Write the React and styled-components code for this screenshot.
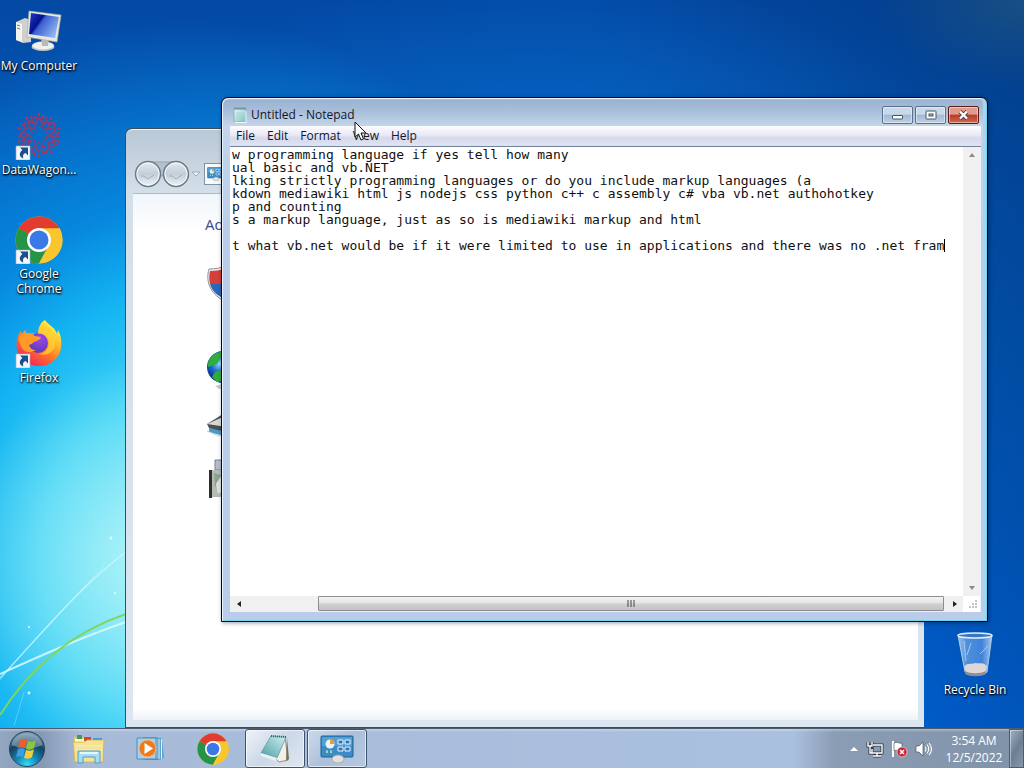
import React from "react";
import styled, { createGlobalStyle, css } from "styled-components";

const GlobalStyle = createGlobalStyle`
  * { box-sizing: border-box; }
  body {
    margin: 0;
    overflow: hidden;
    font: 12px/15px "Open Sans", "Noto Sans", sans-serif;
    color: #15152a;
  }
  button {
    margin: 0;
    padding: 0;
    border: 0;
    background: none;
    color: inherit;
    font: inherit;
  }
  svg { display: block; flex: none; }
`;

const Screen = styled.div`
  display: flex;
  flex-direction: column;
  height: 100vh;
`;

const Workspace = styled.main`
  position: relative;
  flex: 1;
  min-height: 0;
  overflow: hidden;
  background:
    radial-gradient(ellipse 190px 200px at 150px 560px, rgba(200, 250, 248, 0.75), transparent),
    radial-gradient(ellipse 460px 540px at 190px 560px, #7ce8f8 0%, #3ed2f6 32%, #14b4f2 50%, rgba(8, 150, 232, 0.75) 66%, rgba(2, 110, 220, 0) 100%),
    radial-gradient(ellipse 150px 90px at 100% 0, rgba(30, 84, 130, 0.8), transparent),
    radial-gradient(ellipse 420px 220px at 540px 190px, rgba(8, 110, 205, 0.7), transparent),
    linear-gradient(90deg, transparent 60%, rgba(0, 35, 90, 0.35)),
    linear-gradient(#0349a4 0%, #0455b4 18%, #0062ca 50%, #0070f0 100%);
`;

const Rays = styled.svg`
  position: absolute;
  left: 0;
  bottom: 0;
`;

const IconColumn = styled.div`
  position: relative;
  display: flex;
  flex-direction: column;
  gap: 8px;
  width: 78px;
  padding-top: 8px;
`;

const Shortcut = styled.button`
  display: flex;
  flex-direction: column;
  align-items: center;
  gap: 2px;
  height: 96px;
  color: #fff;
  text-shadow: 0 1px 2px #000, 1px 1px 2px #000;
`;

const ShortcutLabel = styled.span`
  width: ${(p) => (p.$narrow ? "60px" : "auto")};
  white-space: ${(p) => (p.$narrow ? "normal" : "nowrap")};
`;

const BinSpot = styled.div`
  position: absolute;
  right: 10px;
  bottom: 0;
  width: 78px;
  display: grid;
`;

const Window = styled.section`
  position: absolute;
  display: flex;
  flex-direction: column;
  border: 1px solid #3c4c5c;
  border-radius: 7px 7px 0 0;
`;

const PanelWindow = styled(Window)`
  inset: 128px 100px 0 125px;
  padding: 0 6px 7px 7px;
  border-right: 0;
  background: linear-gradient(#b9c8d6, #d3dfe9 64px, #dce6f0);
  box-shadow: inset 0 1px #eef4f8;
`;

const PanelNav = styled.nav`
  display: flex;
  align-items: center;
  height: 64px;
  padding-top: 26px;
`;

const AddressBar = styled.div`
  flex: 1;
  display: flex;
  align-items: center;
  height: 22px;
  margin-left: 3px;
  padding-left: 2px;
  border: 1px solid #7d93aa;
  background: #f6fafd;
`;

const PanelBody = styled.div`
  flex: 1;
  padding: 20px 72px 0;
  border-top: 1px solid #a9bccd;
  background: linear-gradient(#f1f6fb, #fff 40px calc(100% - 12px), #eef2f6);
`;

const PanelHeading = styled.h1`
  margin: 0 0 31px;
  font-size: 15px;
  font-weight: 400;
  line-height: 20px;
  color: #3a4a8c;
`;

const CategoryList = styled.div`
  display: grid;
  justify-items: start;
  padding-left: 2px;
  grid-template-rows: 86px 62px 46px 48px;
`;

const NotepadWindow = styled(Window)`
  inset: 97px 36px 106px 221px;
  padding: 0 6px 9px 8px;
  border-color: #050a12;
  background:
    linear-gradient(rgba(255, 255, 255, 0) 110px, #b9cdea 130px),
    linear-gradient(#dbe8f5 0, #9bb3d0 2px, #a8c0dc 14px, #c5d6ea 28px, #bfd2ec 60px);
  box-shadow: inset 1px 1px #e8f2fa, inset -1px -1px #6fd5ee, inset -4px 0 #a8d4ee, 1px 1px 4px rgba(0, 10, 40, 0.4);
`;

const TitleBar = styled.header`
  display: flex;
  align-items: center;
  height: 28px;
  padding: 5px 2px 0 2px;
  gap: 4px;
`;

const Title = styled.h2`
  flex: 1;
  margin: 0;
  font: inherit;
`;

const CaptionButton = styled.button`
  display: grid;
  place-items: center;
  width: 31px;
  height: 18px;
  margin-left: -2px;
  border: 1px solid #57718f;
  border-radius: 2px;
  background: linear-gradient(#c9d9ea 0 45%, #a3bad3 50%, #bdd0e6);
  box-shadow: inset 0 0 0 1px rgba(255, 255, 255, 0.45);
  ${(p) =>
    p.$close &&
    css`
      border-color: #5c1a18;
      background: linear-gradient(#dd9c8d 0 45%, #b83b27 50%, #cf6b50);
    `}
`;

const MenuBar = styled.nav`
  display: flex;
  align-items: center;
  gap: 12px;
  height: 21px;
  padding: 0 0 1px 6px;
  border-bottom: 1px solid #71829d;
  background: linear-gradient(#fdfcff, #e9e9f6 45%, #d5d9ea 60%, #e0e3f2);
`;

const Editor = styled.div`
  flex: 1;
  min-height: 0;
  display: grid;
  grid-template: 1fr 16px / 1fr 17px;
  border-right: 1px solid #e8f0fa;
  background: #fff;
`;

const TextPane = styled.div`
  position: relative;
  display: flex;
`;

const TextArea = styled.textarea`
  flex: 1;
  min-width: 0;
  padding: 1px 0 0 2px;
  border: 0;
  outline: 0;
  resize: none;
  overflow: hidden;
  white-space: pre;
  background: none;
  color: #101010;
  font: 13px/13px "DejaVu Sans Mono", monospace;
`;

const Caret = styled.i`
  position: absolute;
  top: 92px;
  left: 714px;
  width: 1px;
  height: 13px;
  background: #000;
`;

const ScrollTrack = styled.div`
  display: flex;
  flex-direction: ${(p) => (p.$vertical ? "column" : "row")};
  justify-content: space-between;
  background: #f0f0f0;
`;

const ScrollArrow = styled.button`
  display: grid;
  place-items: center;
  width: 17px;
  height: 16px;
`;

const ScrollThumb = styled.div`
  display: grid;
  place-items: center;
  flex: 1;
  margin: 0 2px 1px 71px;
  border: 1px solid #8d8d8d;
  border-radius: 1px;
  background: linear-gradient(#f4f4f4, #e4e4e4 45%, #cfcfcf 55%, #c4c4c4);
`;

const Grip = styled.svg`
  place-self: end;
  margin: 3px;
`;

const Pointer = styled.svg`
  position: absolute;
  left: 354px;
  top: 121px;
`;

const Taskbar = styled.footer`
  display: flex;
  align-items: stretch;
  height: 40px;
  border-top: 1px solid #4b5c70;
  background:
    linear-gradient(rgba(255, 255, 255, 0.35), transparent 3px),
    linear-gradient(90deg, #93a7c0 0, #8497b3 40px, #a7bbd8 80px, #a9c0de calc(100% - 230px), #8b9db4 calc(100% - 190px), #8193a9);
`;

const StartButton = styled.button`
  display: grid;
  place-items: center;
  width: 54px;
  margin-right: 5px;
`;

const TaskButtons = styled.div`
  flex: 1;
  display: flex;
  gap: 2px;
`;

const TaskButton = styled.button`
  display: grid;
  place-items: center;
  width: 60px;
  border: 1px solid transparent;
  border-radius: 3px;
  ${(p) =>
    p.$state &&
    css`
      border-color: #3f536e;
      box-shadow: inset 0 0 0 1px rgba(255, 255, 255, 0.6);
      background: ${p.$state === "active"
        ? "linear-gradient(135deg, #eef2f8, #cbd8e8 50%, #dfe8f2)"
        : "linear-gradient(135deg, #cdd9ea, #adc0da 50%, #b4c8e2)"};
    `}
`;

const Tray = styled.div`
  display: flex;
  align-items: center;
  gap: 7px;
  color: #fff;
`;

const Clock = styled.time`
  width: 70px;
  text-align: center;
  line-height: 17px;
`;

const ShowDesktop = styled.button`
  align-self: stretch;
  width: 15px;
  border: 1px solid #4d5d70;
  background: linear-gradient(120deg, #a3b2c4, #6d7e93 50%, #8797ab);
  box-shadow: inset 1px 1px rgba(255, 255, 255, 0.4);
`;

function LinkArrow() {
  return (
    <g>
      <path d="M1 34h14v14H1z" fill="#f2f7fc" stroke="#9fb4c8" strokeWidth=".6" />
      <path d="M5 35.500h8v8l-2.400-2.400c-2.500 1-3 2.600-2.300 5.400-4.300-1.300-4.600-5.600-.9-8.400z" fill="#1d4f8c" />
    </g>
  );
}

function ComputerIcon() {
  return (
    <svg width="48" height="48" viewBox="0 0 48 48">
      <defs>
        <linearGradient id="crt" x1="0" y1="0" x2="1" y2=".6">
          <stop offset="0" stopColor="#1c3ec4" />
          <stop offset=".4" stopColor="#04108c" />
          <stop offset=".48" stopColor="#3a5fd0" />
          <stop offset="1" stopColor="#8fb4f2" />
        </linearGradient>
      </defs>
      <path d="M1 14l9-4 6 2v22l-8 1-7-3z" fill="#d0d0cc" />
      <path d="M1 14l6 2v18l-6-2z" fill="#f3f3f0" />
      <path d="M2 17l3 1M2 20l3 1" stroke="#777" />
      <ellipse cx="28" cy="39" rx="11.500" ry="4" fill="#bfc0be" />
      <ellipse cx="28" cy="37.500" rx="11" ry="4" fill="#f0f0ee" />
      <path d="M26 30h8l-1 8h-6z" fill="#b9bab8" />
      <path d="M14 3l32 4-4 27-30-5z" fill="#e8e7e1" stroke="#aaa9a4" strokeWidth=".7" />
      <path d="M16 5l28 4-4 21-26-4z" fill="url(#crt)" />
    </svg>
  );
}

function WagonIcon() {
  const spokes = [0, 36, 72, 108, 144, 180, 216, 252, 288, 324];
  return (
    <svg width="48" height="48" viewBox="0 0 48 48">
      <g fill="none" stroke="#b8305a" strokeWidth=".9" strokeOpacity=".85">
        {spokes.map((a) => (
          <g key={a} transform={`rotate(${a} 24 23)`}>
            <path d="M24 16l-4-5 4-4 4 4zM19 13l-3-8 8 2 8-2-3 8M24 7V2" />
            <circle cx="24" cy="2" r=".9" fill="#e0353c" />
            <circle cx="16" cy="5" r=".7" fill="#e0353c" />
          </g>
        ))}
      </g>
      <LinkArrow />
    </svg>
  );
}

function ChromeIcon({ size, linked }) {
  return (
    <svg width={size} height={size} viewBox="0 0 48 48">
      <circle cx="24" cy="24" r="23.500" fill="#f9c62b" />
      <path d="M24 24L3.650 12.250A23.500 23.500 0 0 0 24 47.500l10.200-17.600z" fill="#269447" />
      <path d="M24 24L3.650 12.250A23.500 23.500 0 0 1 44.350 12.250z" fill="#e23c30" />
      <path d="M24 24l9.500 5.500L24 47.500c10 0 23.500-8 23.500-23.500 0-4-1-8-2.700-11.700H24z" fill="#f9c62b" />
      <path d="M24 24L14.500 29.500 3.650 12.250z" fill="#269447" />
      <circle cx="24" cy="24" r="12" fill="#fff" />
      <circle cx="24" cy="24" r="9.500" fill="#3b78e7" />
      {linked && <LinkArrow />}
    </svg>
  );
}

function FirefoxIcon() {
  return (
    <svg width="48" height="48" viewBox="0 0 48 48">
      <defs>
        <linearGradient id="fox" x1=".8" y1=".1" x2=".25" y2=".95">
          <stop offset="0" stopColor="#fff04a" />
          <stop offset=".35" stopColor="#ffb02a" />
          <stop offset=".65" stopColor="#ff6a2c" />
          <stop offset="1" stopColor="#f2245e" />
        </linearGradient>
        <radialGradient id="globeCore" cx=".6" cy=".3" r=".8">
          <stop offset="0" stopColor="#a044e8" />
          <stop offset="1" stopColor="#4b3bb8" />
        </radialGradient>
      </defs>
      <path
        d="M30 0c3 5 10 7 12 14l1-4c3 5 4 11 3 18C44 40 34 46 24 46 11 46 2 37 1.500 25 1.300 19 3 14 6 11l1 3 3-4 2 4c4-1 7-1 11 0 0-6 2-11 7-14z"
        fill="url(#fox)"
      />
      <circle cx="23" cy="23" r="10" fill="url(#globeCore)" />
      <path d="M4 17c4-5 11-5 16-1l6 1c-1 3-4 4-7 5-2 2-3 2-5 3 1 3 3 5 7 5-6 4-13 2-15-4-1-4-3-5-2-9z" fill="#ff9a28" />
      <path d="M23 14c7-1 11 3 11 9s-4 10-10 11c11 3 18-5 16-16C38 9 32 5 29 3c-4 3-5 7-6 11z" fill="#ffd034" fillOpacity=".75" />
      <LinkArrow />
    </svg>
  );
}

function BinIcon() {
  return (
    <svg width="48" height="48" viewBox="0 0 48 48">
      <defs>
        <linearGradient id="glass" x2="1">
          <stop offset="0" stopColor="#b7d6f4" />
          <stop offset=".25" stopColor="#5e9be0" />
          <stop offset=".7" stopColor="#4b8ade" />
          <stop offset="1" stopColor="#c4ddf3" />
        </linearGradient>
      </defs>
      <path d="M7 3h34l-5 37c-3 4-19 4-22 0z" fill="url(#glass)" fillOpacity=".85" stroke="#a9cbe9" />
      <ellipse cx="24" cy="3.500" rx="17" ry="2.500" fill="#3776c0" stroke="#e0eef9" strokeWidth="1.500" />
      <path d="M13 35c3-5 7-2 11-4 4 1 8-1 12 3l-1 6c-3 3-17 3-20 0z" fill="#dcd8d8" />
      <path d="M14 39c5 3 15 3 21 0v3c-5 3-16 3-21 0z" fill="#8f8d92" />
      <path d="M13 9l2 20M20 11l-4 12M29 22l8-8" stroke="#d7e9fa" strokeOpacity=".6" />
    </svg>
  );
}

function NavCircles() {
  return (
    <svg width="68" height="28" viewBox="0 0 68 28">
      <defs>
        <linearGradient id="nav" x2="0" y2="1">
          <stop offset="0" stopColor="#e4ebf1" />
          <stop offset=".5" stopColor="#c3ced8" />
          <stop offset="1" stopColor="#eef3f7" />
        </linearGradient>
      </defs>
      <path d="M15 2h28v9l-14 5-14-5z" fill="#b3c0cd" stroke="#93a2b0" />
      {[15, 43].map((x) => (
        <g key={x}>
          <circle cx={x} cy="14" r="12.500" fill="url(#nav)" stroke="#6c7883" strokeWidth="1.400" />
          <circle cx={x} cy="14" r="11" fill="none" stroke="#f4f8fa" strokeWidth="1" />
          <path d={`M${x - 7} 16h3l4 3 6-4`} stroke="#a0aeba" fill="none" />
        </g>
      ))}
      <path d="M59 12h8l-4 4z" fill="#f0f4f7" stroke="#9eabb8" />
    </svg>
  );
}

function PanelIcon({ width, height }) {
  return (
    <svg width={width} height={height} viewBox="0 0 34 28">
      <rect x="1" y="1" width="32" height="21" rx="1" fill="#3c8cc8" stroke="#1d6195" />
      <rect x="2" y="2" width="30" height="9" fill="#6bb2df" fillOpacity=".5" />
      <circle cx="10" cy="9" r="4.500" fill="#e9f4fa" />
      <path d="M10 9V4.500A4.500 4.500 0 0 1 14.500 9z" fill="#f39b30" />
      <path d="M18 5h5v4h-5zM25 5h5v4h-5zM18 12h5v4h-5zM25 12h5v4h-5z" fill="#2c74b4" stroke="#eef8ff" />
      <path d="M6 17h2M10 17h2M7 15v3M11 15v3" stroke="#c5ef9f" />
      <ellipse cx="18" cy="24" rx="6" ry="4" fill="#e2e2dc" stroke="#989890" strokeWidth=".7" />
    </svg>
  );
}

function ShieldIcon() {
  return (
    <svg width="40" height="40" viewBox="0 0 40 40">
      <path d="M20 0c-5 3-12 4-18 4-4 13 2 27 18 33 16-6 22-20 18-33-6 0-13-1-18-4z" fill="#f0f0ef" stroke="#8c8f96" />
      <path d="M20 2v17H3C2 15 2 10 3 6c6 0 12-1 17-4z" fill="#d6403a" />
      <path d="M20 2v17h17c1-4 1-9 0-13-6 0-12-1-17-4zM3 19h17v16C10 31 5 26 3 19z" fill="#2c68b4" />
    </svg>
  );
}

function GlobeIcon() {
  return (
    <svg width="40" height="40" viewBox="0 0 40 40">
      <defs>
        <radialGradient id="earth" cx=".4" cy=".4">
          <stop offset="0" stopColor="#9fdcf8" />
          <stop offset=".5" stopColor="#1f6ed2" />
          <stop offset="1" stopColor="#0a2f90" />
        </radialGradient>
      </defs>
      <circle cx="16" cy="16" r="16" fill="url(#earth)" />
      <path d="M2 9C6 2 13 0 19 1l-6 6-3 6-6 2-3 1c0-3 0-4 1-7zM8 21l7-2 5 3-3 8-7 1-5-5z" fill="#2fae3c" />
      <path d="M8 35l11-3 10 3-4 3H12z" fill="#c5ccd2" />
    </svg>
  );
}

function PrinterIcon() {
  return (
    <svg width="40" height="24" viewBox="0 0 40 24">
      <path d="M0 11L16 1h22v15L20 21 2 15z" fill="#4c5054" />
      <path d="M0 11L16 4l16 1-12 9z" fill="#d8d8d5" />
      <path d="M2 15l17 4-6 3-11-3z" fill="#4a9cc8" />
      <path d="M0 18l12 5 6-2" stroke="#c6ccd0" fill="none" />
    </svg>
  );
}

function ProgramsIcon() {
  return (
    <svg width="40" height="42" viewBox="0 0 40 42">
      <path d="M8 1h10v10H8z" fill="#b5bccb" stroke="#777f92" />
      <path d="M3 11h30v27H5z" fill="#b4bab4" />
      <path d="M2 11h3v28H2z" fill="#2e302d" />
      <path d="M7 14l10 3v8l-9 3z" fill="#8aa391" />
      <path d="M9 25l5-8 5 13-8 5z" fill="#dfe5da" />
    </svg>
  );
}

function NotepadGlyph() {
  return (
    <svg width="15" height="16" viewBox="0 0 15 16">
      <defs>
        <linearGradient id="paper" x2="1" y2="1">
          <stop offset="0" stopColor="#e5f8f6" />
          <stop offset="1" stopColor="#7fc0c0" />
        </linearGradient>
      </defs>
      <path d="M2 2h12v13H2z" fill="url(#paper)" stroke="#7da9ab" strokeWidth=".7" />
      <path d="M3 .5v2M5 .5v2M7 .5v2M9 .5v2M11 .5v2M13 .5v2" stroke="#45676c" strokeWidth=".8" />
      <path d="M14 4v11.500H3" stroke="#f5fbfb" fill="none" />
      <path d="M4 6h7M4 8h7M4 10h6" stroke="#a2d4d2" strokeWidth=".7" />
    </svg>
  );
}

function StartOrb() {
  return (
    <svg width="40" height="38" viewBox="0 0 40 38">
      <defs>
        <radialGradient id="orb" cx=".5" cy=".95" r=".9">
          <stop offset="0" stopColor="#2fe0fa" />
          <stop offset=".35" stopColor="#1487b4" />
          <stop offset=".7" stopColor="#16415f" />
          <stop offset="1" stopColor="#6c90ab" />
        </radialGradient>
      </defs>
      <circle cx="20" cy="19" r="17.500" fill="url(#orb)" stroke="#26445c" />
      <path d="M4.500 15A16 16 0 0 1 35.500 15C28 19 13 19 4.500 15z" fill="#b7cad8" fillOpacity=".45" />
      <path d="M13 10c3-2 5-1 7 0l-2 8c-2-1-5-1-7 0z" fill="#e85f2a" />
      <path d="M21 11c3 1 6 1 8-1l-2 8c-2 2-5 2-8 1z" fill="#8cc63c" />
      <path d="M11 19c2-1 5-1 7 0l-2 8c-2-1-5-1-7 0z" fill="#3f9be6" />
      <path d="M19 20c3 1 6 1 8-1l-2 8c-2 2-5 2-8 1z" fill="#fccb38" />
    </svg>
  );
}

function ExplorerIcon() {
  return (
    <svg width="34" height="30" viewBox="0 0 34 30">
      <path d="M2 3h9l2 2h18v23H2z" fill="#e9c964" />
      <path d="M5 1h5v4H5z" fill="#39a04b" />
      <path d="M12 3h7v4h-7z" fill="#d2482e" />
      <path d="M21 4h9v4h-9z" fill="#4698dc" />
      <path d="M3 5h9v2h18v4H3z" fill="#fff7cf" />
      <path d="M1 8h12l2-2h17l-1 22H3z" fill="#f6e293" stroke="#cda944" strokeWidth=".7" />
      <path d="M4 12h26M4 16h26" stroke="#fbf0bd" />
      <path d="M6 29V17h22v12h-5v-6H11v6z" fill="#a7dcf1" stroke="#4d9fca" />
      <path d="M8 19h18" stroke="#e5f7fd" strokeWidth="2" />
    </svg>
  );
}

function MediaIcon() {
  return (
    <svg width="30" height="28" viewBox="0 0 30 28">
      <path d="M10 3h16l2 20-4 2H10z" fill="#5ea4cc" />
      <path d="M7 3h15v21H7z" fill="#a6d2e9" stroke="#4288b3" />
      <path d="M1 3h19v21H1z" fill="#a9d0e6" stroke="#4a8bb6" />
      <path d="M23 4v20M25.500 4v20" stroke="#e4f3fa" />
      <circle cx="11.500" cy="13.500" r="8.500" fill="#ee7a1e" stroke="#f7b884" />
      <path d="M8.500 8v11l8.500-5.500z" fill="#fff" />
    </svg>
  );
}

function NotepadTaskIcon() {
  return (
    <svg width="34" height="30" viewBox="0 0 34 30">
      <defs>
        <linearGradient id="pad" x1="1" y1="0" x2="0" y2="1">
          <stop offset="0" stopColor="#d2f0ee" />
          <stop offset="1" stopColor="#4a9da8" />
        </linearGradient>
      </defs>
      <path d="M27 3l3 23-9 2-3-3z" fill="#f1efe6" stroke="#817d6d" strokeWidth=".8" />
      <path d="M29 4l2 21-3 2z" fill="#75705e" />
      <path d="M13 2l15 1-9 21-16-5z" fill="url(#pad)" stroke="#6a9ca2" strokeWidth=".8" />
      <path d="M3 19l16 5-1 3-15-5z" fill="#e8f2f2" />
      <path d="M13 2l15 1" stroke="#45636a" strokeWidth="2" strokeDasharray="1 1" />
    </svg>
  );
}

function TrayIcons() {
  return (
    <>
      <svg width="10" height="6" viewBox="0 0 10 6">
        <path d="M1 5l4-4 4 4z" fill="#fff" />
      </svg>
      <svg width="18" height="18" viewBox="0 0 18 18">
        <g fill="none" stroke="#2b3440" strokeWidth="3">
          <path d="M6 5h10v8H6zM11 13v3M7 16h8M2 2v4h4V2M4 6v7h2" />
        </g>
        <g fill="none" stroke="#fff" strokeWidth="1.400">
          <path d="M7 5h9v8H6V9M11 13v3M7 16h8M2 2v4h4V2M4 6v7h2" />
        </g>
      </svg>
      <svg width="17" height="18" viewBox="0 0 17 18">
        <path d="M2 1v16" stroke="#fff" strokeWidth="2" />
        <path d="M3 3c3-2 5 1 8 0v8c-3 1-5-2-8 0z" fill="#fff" stroke="#3b4450" strokeWidth=".6" />
        <circle cx="11" cy="12" r="5" fill="#cf2533" stroke="#f5d5d8" strokeWidth=".7" />
        <path d="M9 10l4 4M13 10l-4 4" stroke="#fff" strokeWidth="1.500" />
      </svg>
      <svg width="17" height="16" viewBox="0 0 17 16">
        <path d="M1 5h3l4-4v14l-4-4H1z" fill="#fff" stroke="#39434e" strokeWidth=".6" />
        <path d="M10 5.500q2 2.500 0 5M12 3.500q3.500 4.500 0 9M14 2q5 6 0 12" fill="none" stroke="#fff" strokeWidth="1.100" />
      </svg>
    </>
  );
}

function Arrow({ dir, color }) {
  const turn = { up: 0, right: 90, down: 180, left: 270 }[dir];
  return (
    <svg width="8" height="8" viewBox="0 0 8 8">
      <path d="M1 6l3-4 3 4z" fill={color} transform={`rotate(${turn} 4 4)`} />
    </svg>
  );
}

const shortcuts = [
  { label: "My Computer", icon: <ComputerIcon /> },
  { label: "DataWagon...", icon: <WagonIcon /> },
  { label: "Google Chrome", icon: <ChromeIcon size={48} linked />, narrow: true },
  { label: "Firefox", icon: <FirefoxIcon /> },
];

const text = `w programming language if yes tell how many
ual basic and vb.NET
lking strictly programming languages or do you include markup languages (a
kdown mediawiki html js nodejs css python c++ c assembly c# vba vb.net authohotkey
p and counting
s a markup language, just as so is mediawiki markup and html

t what vb.net would be if it were limited to use in applications and there was no .net fram`;

function ControlPanel() {
  return (
    <PanelWindow>
      <PanelNav>
        <NavCircles />
        <AddressBar>
          <PanelIcon width={17} height={16} />
        </AddressBar>
      </PanelNav>
      <PanelBody>
        <PanelHeading>Adjust your computer's settings</PanelHeading>
        <CategoryList>
          <ShieldIcon />
          <GlobeIcon />
          <PrinterIcon />
          <ProgramsIcon />
        </CategoryList>
      </PanelBody>
    </PanelWindow>
  );
}

function Notepad() {
  return (
    <NotepadWindow>
      <TitleBar>
        <NotepadGlyph />
        <Title>Untitled - Notepad</Title>
        <CaptionButton aria-label="Minimize">
          <svg width="13" height="10" viewBox="0 0 13 10">
            <rect x="1.500" y="5.500" width="10" height="3.500" rx=".5" fill="#fff" stroke="#445468" />
          </svg>
        </CaptionButton>
        <CaptionButton aria-label="Maximize">
          <svg width="12" height="10" viewBox="0 0 12 10">
            <rect x="1" y="1" width="10" height="8" rx=".5" fill="#fff" stroke="#445468" />
            <rect x="4" y="4" width="4" height="2" fill="#a9bdd4" stroke="#445468" />
          </svg>
        </CaptionButton>
        <CaptionButton $close aria-label="Close">
          <svg width="13" height="10" viewBox="0 0 13 10">
            <path d="M3 1.500l7 7M10 1.500l-7 7" stroke="#5b3a42" strokeWidth="4" />
            <path d="M3 1.500l7 7M10 1.500l-7 7" stroke="#fff" strokeWidth="2.400" />
          </svg>
        </CaptionButton>
      </TitleBar>
      <MenuBar>
        {["File", "Edit", "Format", "View", "Help"].map((item) => (
          <button key={item}>{item}</button>
        ))}
      </MenuBar>
      <Editor>
        <TextPane>
          <TextArea aria-label="Document" wrap="off" spellCheck={false} defaultValue={text} />
          <Caret />
        </TextPane>
        <ScrollTrack $vertical>
          <ScrollArrow aria-label="Scroll up"><Arrow dir="up" color="#8a8a8a" /></ScrollArrow>
          <ScrollArrow aria-label="Scroll down"><Arrow dir="down" color="#8a8a8a" /></ScrollArrow>
        </ScrollTrack>
        <ScrollTrack>
          <ScrollArrow aria-label="Scroll left"><Arrow dir="left" color="#222" /></ScrollArrow>
          <ScrollThumb>
            <svg width="8" height="7" viewBox="0 0 8 7">
              <path d="M1 0v7M4 0v7M7 0v7" stroke="#444" />
            </svg>
          </ScrollThumb>
          <ScrollArrow aria-label="Scroll right"><Arrow dir="right" color="#222" /></ScrollArrow>
        </ScrollTrack>
        <Grip width="9" height="9" viewBox="0 0 9 9">
          <path d="M7 0h2v2H7zM7 3h2v2H7zM4 3h2v2H4zM7 6h2v2H7zM4 6h2v2H4zM1 6h2v2H1z" fill="#c4c4c4" />
        </Grip>
      </Editor>
    </NotepadWindow>
  );
}

export default function App() {
  return (
    <Screen>
      <GlobalStyle />
      <Workspace>
        <Rays width="126" height="210" viewBox="0 0 126 210" fill="none">
          <path d="M0 160C40 118 80 68 126 34" stroke="#d6fbff" strokeOpacity=".7" strokeWidth="1.400" />
          <path d="M0 162C30 124 70 85 104 48" stroke="#d6fbff" strokeOpacity=".4" />
          <path d="M0 156C40 138 80 120 126 104" stroke="#e6fdff" strokeOpacity=".8" strokeWidth="2" />
          <path d="M0 197C30 150 70 115 126 96" stroke="#7fd65c" strokeWidth="2" />
          <path d="M24 174L14 208" stroke="#d6fbff" strokeOpacity=".3" />
          <g fill="#e6fdff">
            <circle cx="111" cy="20" r="1.500" />
            <circle cx="115" cy="75" r="1" />
            <circle cx="29" cy="109" r="1" />
            <circle cx="29" cy="175" r="1.400" />
          </g>
        </Rays>
        <IconColumn>
          {shortcuts.map(({ label, icon, narrow }) => (
            <Shortcut key={label}>
              {icon}
              <ShortcutLabel $narrow={narrow}>{label}</ShortcutLabel>
            </Shortcut>
          ))}
        </IconColumn>
        <BinSpot>
          <Shortcut>
            <BinIcon />
            <ShortcutLabel>Recycle Bin</ShortcutLabel>
          </Shortcut>
        </BinSpot>
        <ControlPanel />
        <Notepad />
        <Pointer width="13" height="20" viewBox="0 0 13 20">
          <path d="M1 1v15l3.500-3 2.500 6 2.500-1-2.500-6H12z" fill="#fff" stroke="#111" />
        </Pointer>
      </Workspace>
      <Taskbar>
        <StartButton aria-label="Start"><StartOrb /></StartButton>
        <TaskButtons>
          <TaskButton aria-label="Windows Explorer"><ExplorerIcon /></TaskButton>
          <TaskButton aria-label="Media Player"><MediaIcon /></TaskButton>
          <TaskButton aria-label="Google Chrome"><ChromeIcon size={32} /></TaskButton>
          <TaskButton aria-label="Notepad" $state="active"><NotepadTaskIcon /></TaskButton>
          <TaskButton aria-label="Control Panel" $state="open"><PanelIcon width={34} height={28} /></TaskButton>
        </TaskButtons>
        <Tray>
          <TrayIcons />
          <Clock>
            3:54 AM
            <br />
            12/5/2022
          </Clock>
        </Tray>
        <ShowDesktop aria-label="Show desktop" />
      </Taskbar>
    </Screen>
  );
}
